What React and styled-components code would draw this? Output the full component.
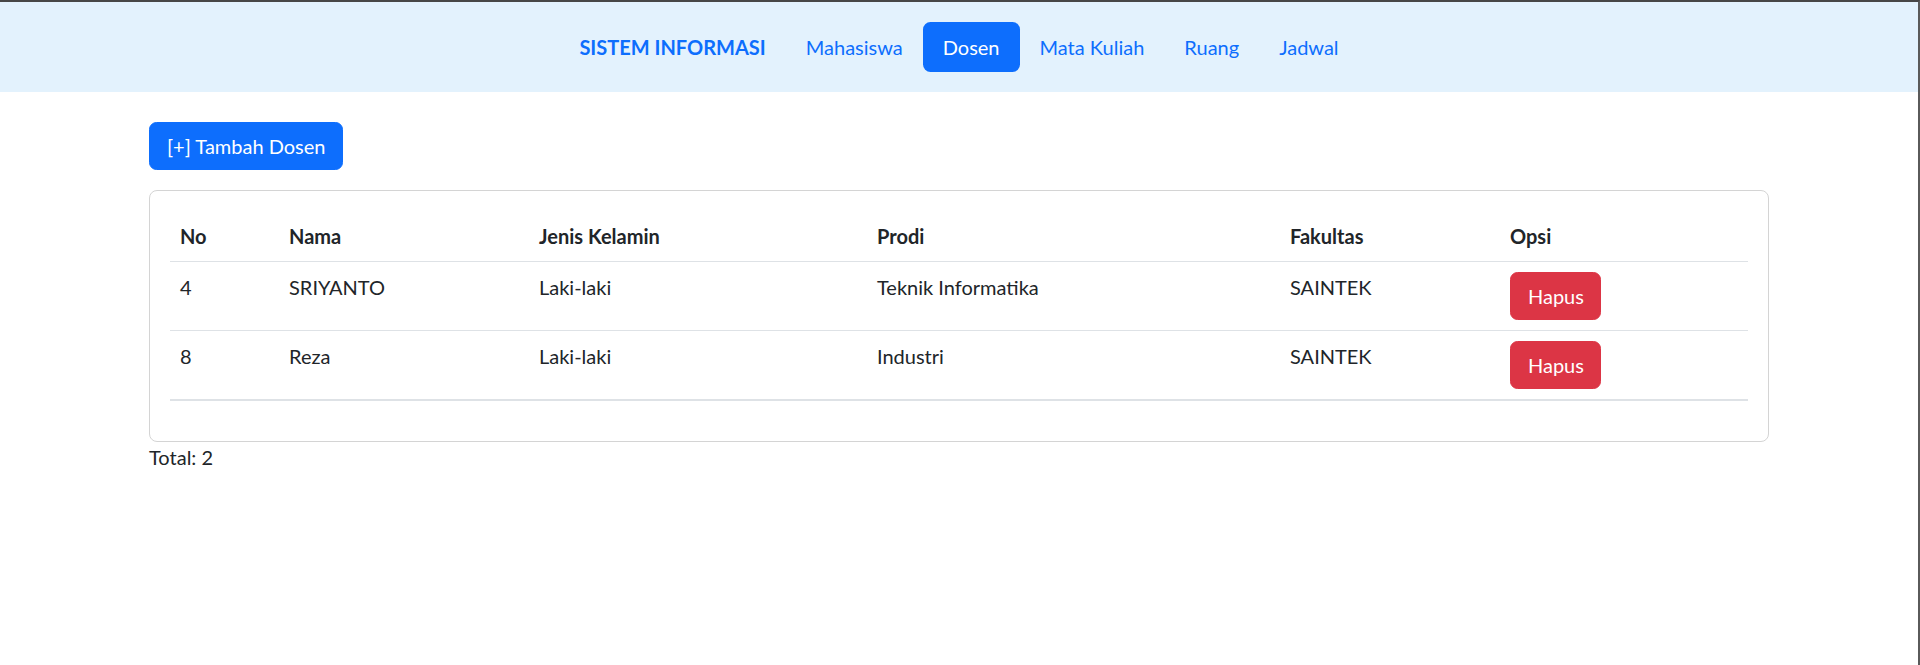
import React from "react";
import styled, { createGlobalStyle } from "styled-components";

const GlobalStyle = createGlobalStyle`
  html {
    border-top: 2px solid #474747;
    border-right: 2px solid #5a5a5a;
    box-sizing: border-box;
    min-height: 100%;
  }

  body {
    margin: 0;
    font-family: Lato, "Liberation Sans", sans-serif;
    font-size: 20px;
    line-height: 1.5;
    color: #212529;
    background: #fff;
  }

  *, *::before, *::after {
    box-sizing: border-box;
  }
`;

const NavBar = styled.nav`
  background-color: #e3f2fd;
  padding: 20px 0 20px 20px;
  display: flex;
  justify-content: center;
  align-items: center;
`;

const Brand = styled.a`
  font-weight: 700;
  font-size: 20px;
  color: #0d6efd;
  text-decoration: none;
  margin-right: 20px;
`;

const NavList = styled.ul`
  display: flex;
  list-style: none;
  margin: 0;
  padding: 0;
`;

const NavLink = styled.a`
  display: block;
  padding: 10px 20px;
  border-radius: 7.5px;
  text-decoration: none;
  color: ${({ $active }) => ($active ? "#fff" : "#0d6efd")};
  background-color: ${({ $active }) => ($active ? "#0d6efd" : "transparent")};
`;

const Container = styled.main`
  width: 1620px;
  margin: 30px auto 0;
`;

const Button = styled.button`
  font-family: inherit;
  font-size: 20px;
  line-height: 30px;
  padding: 8px 16px 8px 17px;
  border: 1px solid ${({ $variant }) => ($variant === "danger" ? "#dc3545" : "#0d6efd")};
  border-radius: 7.5px;
  color: #fff;
  background-color: ${({ $variant }) => ($variant === "danger" ? "#dc3545" : "#0d6efd")};
  cursor: pointer;
`;

const Card = styled.section`
  margin-top: 20px;
  border: 1px solid #d4d4d4;
  border-radius: 8px;
  padding: 20px;
`;

const Table = styled.table`
  width: 100%;
  border-collapse: collapse;
  margin-bottom: 20px;
  border-bottom: 2px solid #dee2e6;
`;

const HeadCell = styled.th`
  text-align: left;
  vertical-align: top;
  font-weight: 700;
  padding: 10px;
  border-bottom: 1px solid #dee2e6;
  width: ${({ $w }) => $w}px;
`;

const Cell = styled.td`
  vertical-align: top;
  padding: 10px;
  border-bottom: 1px solid #dee2e6;
`;

const Total = styled.div`
  padding-top: 0;
`;

const columns = [
  { label: "No", w: 109 },
  { label: "Nama", w: 250 },
  { label: "Jenis Kelamin", w: 338 },
  { label: "Prodi", w: 413 },
  { label: "Fakultas", w: 220 },
  { label: "Opsi", w: 248 },
];

const dosen = [
  { no: 4, nama: "SRIYANTO", jk: "Laki-laki", prodi: "Teknik Informatika", fakultas: "SAINTEK" },
  { no: 8, nama: "Reza", jk: "Laki-laki", prodi: "Industri", fakultas: "SAINTEK" },
];

const menu = ["Mahasiswa", "Dosen", "Mata Kuliah", "Ruang", "Jadwal"];

export default function App() {
  return (
    <>
      <GlobalStyle />
      <NavBar>
        <Brand href="#">SISTEM INFORMASI</Brand>
        <NavList>
          {menu.map((item) => (
            <li key={item}>
              <NavLink href="#" $active={item === "Dosen"}>{item}</NavLink>
            </li>
          ))}
        </NavList>
      </NavBar>
      <Container>
        <Button>[+] Tambah Dosen</Button>
        <Card>
          <Table>
            <thead>
              <tr>
                {columns.map((c) => (
                  <HeadCell key={c.label} $w={c.w}>{c.label}</HeadCell>
                ))}
              </tr>
            </thead>
            <tbody>
              {dosen.map((d) => (
                <tr key={d.no}>
                  <Cell>{d.no}</Cell>
                  <Cell>{d.nama}</Cell>
                  <Cell>{d.jk}</Cell>
                  <Cell>{d.prodi}</Cell>
                  <Cell>{d.fakultas}</Cell>
                  <Cell>
                    <Button $variant="danger">Hapus</Button>
                  </Cell>
                </tr>
              ))}
            </tbody>
          </Table>
        </Card>
        <Total>Total: {dosen.length}</Total>
      </Container>
    </>
  );
}
